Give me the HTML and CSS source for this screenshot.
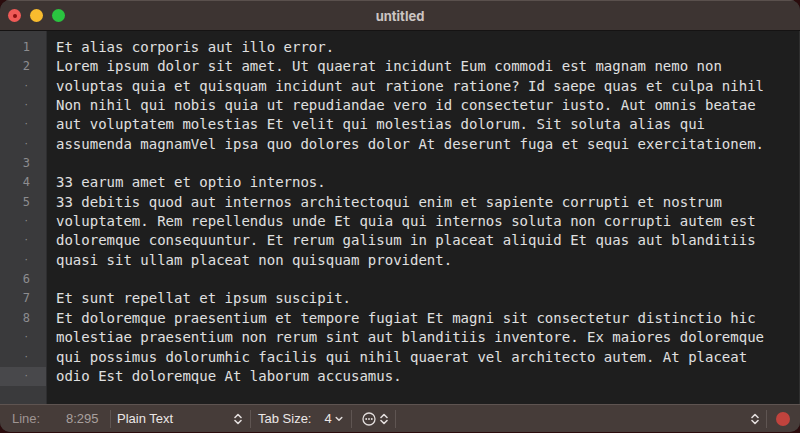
FILE: index.html
```html
<!DOCTYPE html>
<html>
<head>
<meta charset="utf-8">
<link rel="stylesheet" href="styles.css">
</head>
<body>
<div class="window">
  <div class="titlebar">
    <div class="lights">
      <span class="light red"><span class="dot"></span></span>
      <span class="light yellow"></span>
      <span class="light green"></span>
    </div>
    <div class="title">untitled</div>
  </div>
  <div class="editor">
    <div class="gutter">
      <div class="g">1</div>
      <div class="g">2</div>
      <div class="g d">·</div>
      <div class="g d">·</div>
      <div class="g d">·</div>
      <div class="g d">·</div>
      <div class="g">3</div>
      <div class="g">4</div>
      <div class="g">5</div>
      <div class="g d">·</div>
      <div class="g d">·</div>
      <div class="g d">·</div>
      <div class="g">6</div>
      <div class="g">7</div>
      <div class="g">8</div>
      <div class="g d">·</div>
      <div class="g d">·</div>
      <div class="g d cur">·</div>
    </div>
    <div class="text">
      <div class="l">Et alias corporis aut illo error.</div>
      <div class="l">Lorem ipsum dolor sit amet. Ut quaerat incidunt Eum commodi est magnam nemo non</div>
      <div class="l">voluptas quia et quisquam incidunt aut ratione ratione? Id saepe quas et culpa nihil</div>
      <div class="l">Non nihil qui nobis quia ut repudiandae vero id consectetur iusto. Aut omnis beatae</div>
      <div class="l">aut voluptatem molestias Et velit qui molestias dolorum. Sit soluta alias qui</div>
      <div class="l">assumenda magnamVel ipsa quo dolores dolor At deserunt fuga et sequi exercitationem.</div>
      <div class="l"> </div>
      <div class="l">33 earum amet et optio internos.</div>
      <div class="l">33 debitis quod aut internos architectoqui enim et sapiente corrupti et nostrum</div>
      <div class="l">voluptatem. Rem repellendus unde Et quia qui internos soluta non corrupti autem est</div>
      <div class="l">doloremque consequuntur. Et rerum galisum in placeat aliquid Et quas aut blanditiis</div>
      <div class="l">quasi sit ullam placeat non quisquam provident.</div>
      <div class="l"> </div>
      <div class="l">Et sunt repellat et ipsum suscipit.</div>
      <div class="l">Et doloremque praesentium et tempore fugiat Et magni sit consectetur distinctio hic</div>
      <div class="l">molestiae praesentium non rerum sint aut blanditiis inventore. Ex maiores doloremque</div>
      <div class="l">qui possimus dolorumhic facilis qui nihil quaerat vel architecto autem. At placeat</div>
      <div class="l">odio Est doloremque At laborum accusamus.</div>
    </div>
  </div>
  <div class="status">
    <span class="lbl">Line:</span>
    <span class="pos">8:295</span>
    <span class="sep"></span>
    <span class="mode">Plain Text</span>
    <svg class="updown w1" width="8" height="12" viewBox="0 0 8 12"><path d="M1 4.5 L4 1.5 L7 4.5 M1 7.5 L4 10.5 L7 7.5" fill="none" stroke="#e2dddc" stroke-width="1.6" stroke-linecap="round" stroke-linejoin="round"/></svg>
    <span class="sep"></span>
    <span class="tab">Tab Size:</span>
    <span class="four">4</span>
    <svg class="down" width="8" height="6" viewBox="0 0 8 6"><path d="M1.2 1.5 L4 4.3 L6.8 1.5" fill="none" stroke="#e2dddc" stroke-width="1.5" stroke-linecap="round" stroke-linejoin="round"/></svg>
    <span class="sep"></span>
    <svg class="ell" width="14" height="14" viewBox="0 0 14 14"><circle cx="7" cy="7" r="6" fill="none" stroke="#e2dddc" stroke-width="1.3"/><circle cx="4.2" cy="7" r="0.95" fill="#e2dddc"/><circle cx="7" cy="7" r="0.95" fill="#e2dddc"/><circle cx="9.8" cy="7" r="0.95" fill="#e2dddc"/></svg>
    <svg class="updown w2" width="8" height="12" viewBox="0 0 8 12"><path d="M1 4.5 L4 1.5 L7 4.5 M1 7.5 L4 10.5 L7 7.5" fill="none" stroke="#e2dddc" stroke-width="1.6" stroke-linecap="round" stroke-linejoin="round"/></svg>
    <span class="sep"></span>
    <span class="spacer"></span>
    <svg class="updown w3" width="8" height="12" viewBox="0 0 8 12"><path d="M1 4.5 L4 1.5 L7 4.5 M1 7.5 L4 10.5 L7 7.5" fill="none" stroke="#e2dddc" stroke-width="1.6" stroke-linecap="round" stroke-linejoin="round"/></svg>
    <span class="sep"></span>
    <span class="rec"></span>
  </div>
</div>
</body>
</html>
```

FILE: styles.css
```css
html, body {
  margin: 0;
  padding: 0;
  width: 800px;
  height: 433px;
  overflow: hidden;
  background: #2b0c0d;
}
.window {
  width: 800px;
  height: 432px;
  border-radius: 10px;
  overflow: hidden;
  display: flex;
  flex-direction: column;
  background: #1e1e1e;
  box-shadow: inset 0 0 0 1px rgba(255,255,255,0.08);
}
.titlebar {
  flex: none;
  background: #3d3432;
  border-bottom: 1px solid #151313;
  display: flex;
  align-items: center;
  position: relative;
  border-top: 1px solid #5a504d;
  box-sizing: border-box;
  height: 31px;
}
.lights {
  display: flex;
  gap: 9px;
  padding-left: 8px;
  align-items: center;
}
.light {
  width: 13px;
  height: 13px;
  border-radius: 50%;
  display: flex;
  align-items: center;
  justify-content: center;
}
.red { background: #f05a57; }
.red .dot { width: 4px; height: 4px; border-radius: 50%; background: #8a1010; }
.yellow { background: #f8bb2e; }
.green { background: #2ac440; }
.title {
  position: absolute;
  left: 0;
  right: 0;
  top: 0;
  bottom: 0;
  display: flex;
  align-items: center;
  justify-content: center;
  font-family: Inter, "Liberation Sans", sans-serif;
  font-weight: 700;
  font-size: 13px;
  color: #cbc4c2;
}
.editor {
  flex: 1;
  display: flex;
  min-height: 0;
}
.gutter {
  width: 47px;
  flex: none;
  background: #3a3a3c;
  padding-top: 7px;
  border-right: 1px solid #2e2e30;
  box-sizing: border-box;
}
.g {
  height: 19.35px;
  line-height: 19.35px;
  text-align: right;
  padding-right: 16px;
  font-family: "DejaVu Sans Mono", monospace;
  font-size: 12px;
  color: #8d8d90;
}
.g.d { font-size: 9px; padding-right: 17px; }
.g.cur { background: #48484b; }
.text {
  flex: 1;
  padding-top: 7px;
  padding-left: 9px;
  font-family: "DejaVu Sans Mono", monospace;
  font-size: 14px;
  color: #e0e0e0;
}
.l {
  height: 19.35px;
  line-height: 19.35px;
  white-space: pre;
}
.status {
  height: 27px;
  flex: none;
  background: #463c39;
  border-top: 1px solid #5e5451;
  display: flex;
  align-items: center;
  font-family: "Liberation Sans", Arial, sans-serif;
  font-size: 13px;
  color: #ebe7e6;
  padding-left: 12px;
  padding-right: 10px;
}
.lbl { color: #9f9593; width: 54px; }
.pos { color: #a8a09e; width: 44px; }
.sep {
  width: 1px;
  height: 18px;
  background: #5f5552;
}
.mode { margin-left: 6px; width: 117px; }
.updown.w1 { margin-right: 8px; }
.tab { margin-left: 7px; }
.four { margin-left: 13px; }
.down { margin-left: 3px; margin-right: 8px; }
.ell { margin-left: 10px; }
.updown.w2 { margin-left: 4px; margin-right: 7px; }
.spacer { flex: 1; }
.updown.w3 { margin-right: 7px; }
.rec {
  width: 14px;
  height: 14px;
  border-radius: 50%;
  background: #c0433d;
  margin-left: 9px;
}
```
